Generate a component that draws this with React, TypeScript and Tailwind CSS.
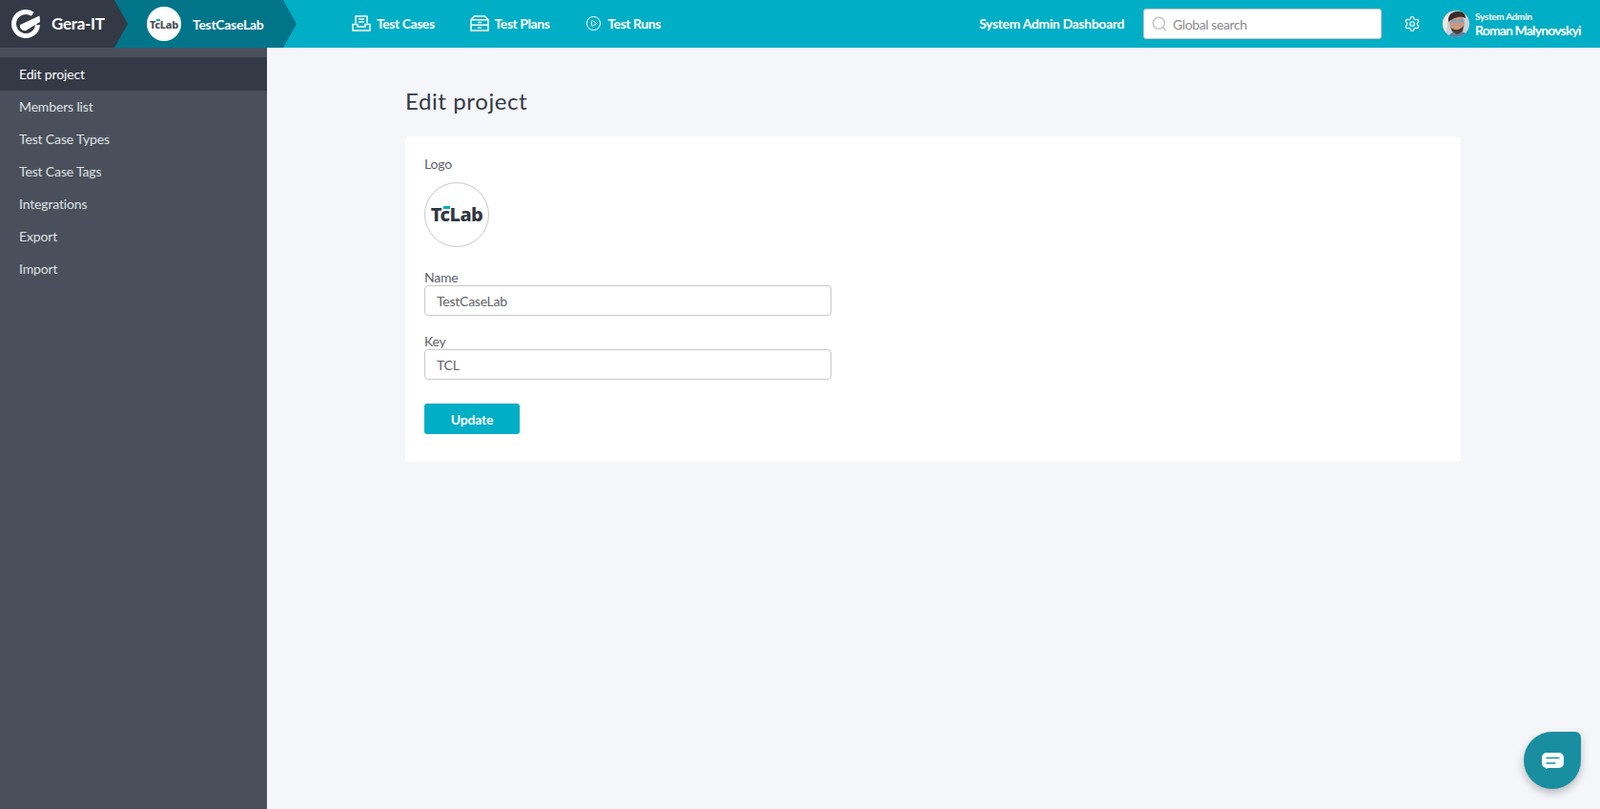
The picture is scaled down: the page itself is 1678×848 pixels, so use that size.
import { Search, Settings, CirclePlay } from "lucide-react"

const FONT = "font-['Lato','Noto_Sans',sans-serif]"

const SIDE_ITEMS = [
  "Edit project",
  "Members list",
  "Test Case Types",
  "Test Case Tags",
  "Integrations",
  "Export",
  "Import",
]

const GeraLogo = () => (
  <svg width="30" height="30" viewBox="0 0 30 30" fill="none">
    <path d="M22.200 4.800A12.500 12.500 0 1 0 27.500 16" stroke="#fff" strokeWidth="5" />
    <path d="M9 16L29.500 6.500 30 13 17.500 20.500A5 5 0 0 1 9 16z" fill="#fff" />
  </svg>
)

const TcLabMark = ({ size }: { size: "sm" | "lg" }) => (
  <span
    className={
      size === "lg"
        ? "relative font-['Noto_Sans',sans-serif] text-[20px] leading-none font-extrabold tracking-[-0.5px] text-[#2f3744]"
        : "relative font-['Noto_Sans',sans-serif] text-[11px] leading-none font-extrabold tracking-[-0.3px] text-[#4a4f58]"
    }
  >
    TcLab
    <span
      className={
        size === "lg"
          ? "absolute top-[1px] left-[13px] h-[3px] w-[7px] bg-[#00aec5]"
          : "absolute top-0 left-[7px] h-[2px] w-[4px] bg-[#00aec5]"
      }
    />
  </span>
)

const CasesIcon = () => (
  <svg width="20" height="17" viewBox="0 0 20 17" fill="none" stroke="#fff" strokeWidth="1.5">
    <path d="M4 8.500V1h12v7.500" />
    <path d="M7 4h6M7 7h6" />
    <path d="M1 9.500h5V12h8V9.500h5V16H1z" />
  </svg>
)

const PlansIcon = () => (
  <svg width="20" height="17" viewBox="0 0 20 17" fill="none" stroke="#fff" strokeWidth="1.5">
    <path d="M4.500 1h11L19 4.500V16H1V4.500z" />
    <path d="M1 4.800h18M1 10.300h18" />
    <path d="M8 7.500h4M8 13h4" />
  </svg>
)

const Avatar = () => (
  <svg width="28" height="28" viewBox="0 0 28 28" className="rounded-full">
    <rect width="28" height="28" fill="#c9d3da" />
    <path d="M0 0h9L5 14 3 28H0z" fill="#ece8e4" />
    <path d="M6 28c1-4 5-6 10-6s9 2 12 4v2z" fill="#5d7f9e" />
    <ellipse cx="15" cy="13" rx="8" ry="10" fill="#c79a80" />
    <path d="M6 12C5 5 10 1 16 1s8 3 8 7c-4-2-11-2-18 4z" fill="#3a2c28" />
    <path d="M8 17c3 4 9 5 14-1l-1 6-6 3-5-3z" fill="#4a3a34" />
    <path d="M9 11.500l5-.5M16 11l6-.5" stroke="#7d9fc4" strokeWidth="3" />
  </svg>
)

const Field = ({ label, value }: { label: string; value: string }) => (
  <div>
    <label className="block text-[14px] leading-[17px] tracking-[-0.2px] text-[#5f6368]">{label}</label>
    <input
      readOnly
      value={value}
      className="block h-[32px] w-[427px] rounded-[4px] border border-[#c8c8c8] bg-white px-[12px] text-[14px] tracking-[-0.25px] text-[#5f6368] outline-none"
    />
  </div>
)

export default function App() {
  return (
    <div className={`${FONT} flex h-[848px] w-[1678px] flex-col overflow-hidden bg-[#f5f6fa]`}>
      {/* Top bar */}
      <header className="flex h-[50px] shrink-0 items-center bg-[#00aec5] text-white">
        <div className="z-20 -mr-[14px] flex h-full w-[134px] items-center bg-[#343a45] pl-[12px] [clip-path:polygon(0_0,120px_0,134px_50%,120px_100%,0_100%)]">
          <GeraLogo />
          <span className="ml-[12px] text-[17px] font-bold tracking-[-0.3px]">Gera-IT</span>
        </div>
        <div className="z-10 flex h-full w-[191px] items-center bg-[#00758a] pl-[34px] [clip-path:polygon(0_0,177px_0,191px_50%,177px_100%,0_100%)]">
          <span className="flex h-[36px] w-[36px] items-center justify-center rounded-full bg-white">
            <TcLabMark size="sm" />
          </span>
          <span className="ml-[12px] text-[14px] font-bold tracking-[-0.3px]">TestCaseLab</span>
        </div>

        <nav className="ml-[58px] flex items-center gap-[37px] pb-[2px] text-[14px] font-bold tracking-[-0.45px]">
          <a className="flex items-center gap-[6px]">
            <CasesIcon />
            Test Cases
          </a>
          <a className="flex items-center gap-[6px]">
            <PlansIcon />
            Test Plans
          </a>
          <a className="ml-[1px] flex items-center gap-[6px]">
            <CirclePlay size={17} strokeWidth={1.4} />
            Test Runs
          </a>
        </nav>

        <div className="ml-auto flex items-center">
          <span className="pb-[2px] text-[14px] font-bold tracking-[-0.35px]">System Admin Dashboard</span>
          <div className="ml-[20px] flex h-[32px] w-[250px] items-center rounded-[3px] border border-[#c8c8c8] bg-white pl-[7px]">
            <Search size={18} strokeWidth={2} className="text-[#c4c4c4]" />
            <span className="ml-[5px] text-[14px] tracking-[-0.4px] text-[#8c8c8c]">Global search</span>
          </div>
          <Settings size={18} strokeWidth={1.6} className="ml-[23px]" />
          <div className="ml-[23px] h-[28px]">
            <Avatar />
          </div>
          <div className="mr-[20px] ml-[6px] flex w-[111px] flex-col whitespace-nowrap">
            <span className="text-[10px] leading-[12px] font-bold tracking-[-0.3px]">System Admin</span>
            <span className="text-[14px] leading-[17px] font-bold tracking-[-0.85px]">Roman Malynovskyi</span>
          </div>
        </div>
      </header>

      <div className="flex min-h-0 flex-1">
        {/* Sidebar */}
        <aside className="w-[280px] shrink-0 bg-[#4a505b] pt-[10px] text-[14px] tracking-[-0.15px] text-[#dfe1e4]">
          {SIDE_ITEMS.map((item, i) => (
            <div
              key={item}
              className={
                i === 0
                  ? "mb-[-1px] flex h-[35px] items-center bg-[#343a45] pl-[20px] text-white"
                  : "flex h-[34px] items-center pl-[20px]"
              }
            >
              {item}
            </div>
          ))}
        </aside>

        {/* Content */}
        <main className="relative flex-1 pt-[39px] pl-[145px]">
          <h1 className="text-[24px] leading-[33px] font-normal tracking-[0.6px] text-[#343a45]">Edit project</h1>
          <section className="mt-[21px] h-[341px] w-[1107px] rounded-[4px] bg-white pt-[20px] pl-[20px]">
            <div className="text-[14px] leading-[17px] tracking-[-0.2px] text-[#5f6368]">Logo</div>
            <div className="mt-[11px] flex h-[68px] w-[68px] items-center justify-center rounded-full border border-[#c8c8c8]">
              <TcLabMark size="lg" />
            </div>
            <div className="mt-[23px] flex flex-col gap-[18px]">
              <Field label="Name" value="TestCaseLab" />
              <Field label="Key" value="TCL" />
            </div>
            <button className="mt-[25px] h-[32px] w-[100px] rounded-[3px] bg-[#00aec5] text-[14px] font-bold tracking-[-0.2px] text-white">
              Update
            </button>
          </section>

          {/* Chat bubble */}
          <button className="absolute right-[20px] bottom-[21px] flex h-[60px] w-[60px] items-center justify-center rounded-[30px] rounded-tr-[6px] bg-[#1a8ea1] shadow-[0_4px_8px_rgba(0,0,0,0.25)]">
            <svg width="23" height="17" viewBox="0 0 23 17">
              <path
                d="M5 0h13a5 5 0 0 1 5 5v6a5 5 0 0 1-5 5H7l-3 1v-1.200A5 5 0 0 1 0 11V5a5 5 0 0 1 5-5z"
                fill="#fff"
              />
              <path d="M4.500 5.500h14M4.500 11h10" stroke="#1a8ea1" strokeWidth="1.600" />
            </svg>
          </button>
        </main>
      </div>
    </div>
  )
}
